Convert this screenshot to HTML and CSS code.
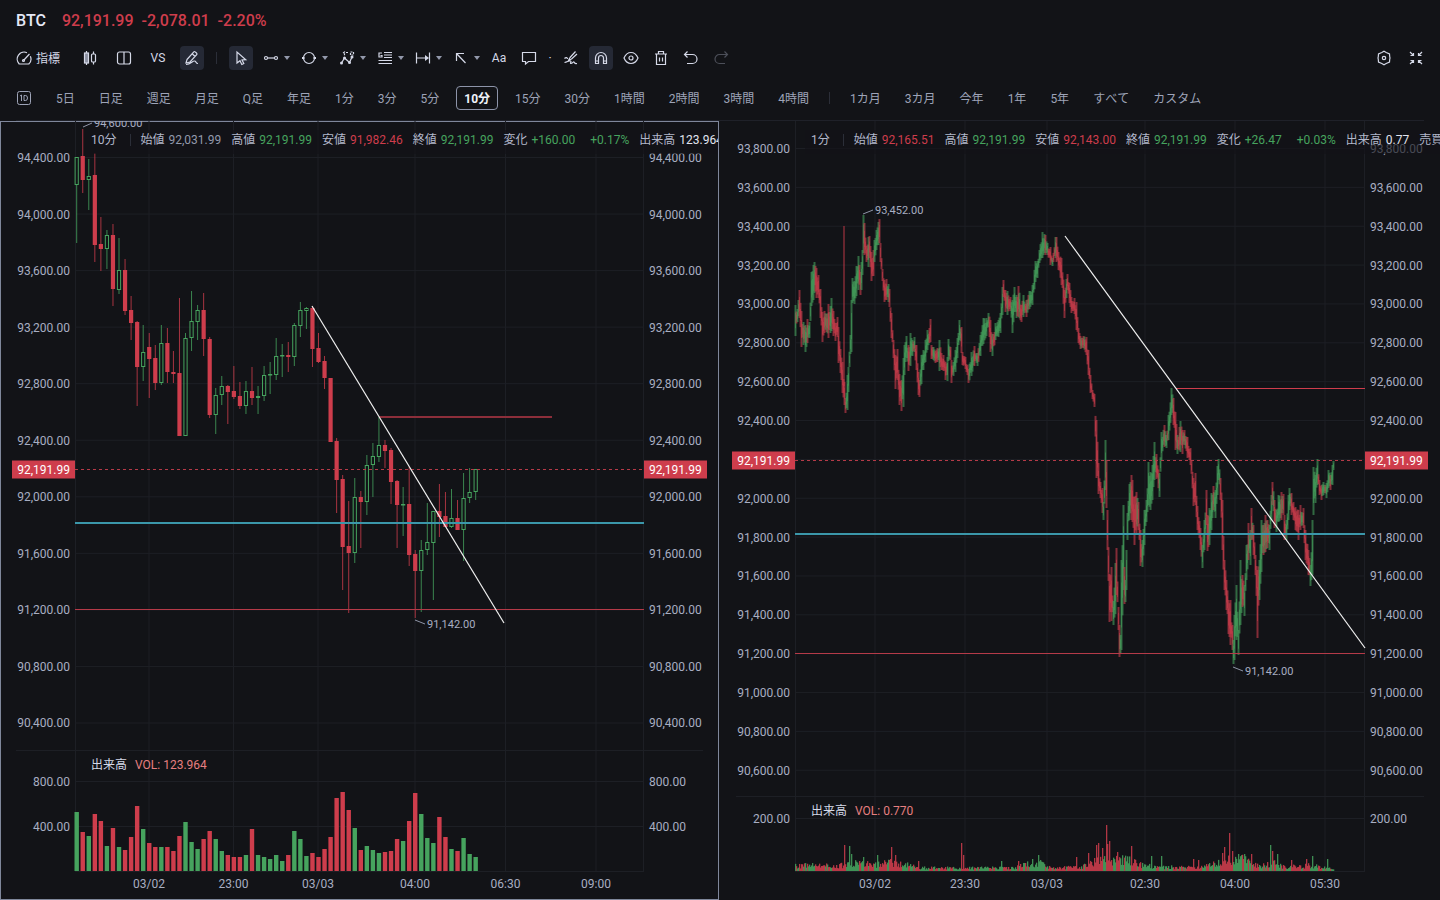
FILE: index.html
```html
<!DOCTYPE html>
<html lang="ja">
<head>
<meta charset="utf-8">
<title>BTC チャート</title>
<link rel="stylesheet" href="styles.css">
</head>
<body>
<main class="app">
  <header class="quote">
    <h1 class="symbol">BTC</h1>
    <span>92,191.99</span><span>-2,078.01</span><span>-2.20%</span>
  </header>

  <nav class="tools" aria-label="ツール">
    <button class="tool tool-text"><svg viewBox="0 0 16 16"><path d="M3.2 14h9.6A7 7 0 0 0 14.400 6.200M11 2.700A7 7 0 0 0 3.200 14M7.500 10.500l6-6.500"/><circle cx="7.500" cy="10.500" r="1"/></svg><span>指標</span></button>
    <button class="tool first" aria-label="ローソク足"><svg viewBox="0 0 16 16"><path d="M4.500 1v2M4.500 13v2M11.500 1.500V4M11.500 12v2.500"/><rect x="2.500" y="3" width="4" height="10" fill="#8b90a0"/><rect x="9.500" y="4" width="4" height="8" rx="1"/></svg></button>
    <button class="tool" aria-label="レイアウト"><svg viewBox="0 0 16 16"><rect x="1.500" y="2" width="13" height="12" rx="2"/><path d="M8 2v12"/></svg></button>
    <button class="tool">VS</button>
    <button class="tool on" aria-label="描画"><svg viewBox="0 0 16 16"><path d="M3 9.500l6.800-7.600a1 1 0 0 1 1.400 0l1.500 1.400a1 1 0 0 1 0 1.400L6 12l-4 1zM8.500 4l2.500 2.500M2 14.500c5 0 6-3.500 8.500-3.500 2 0 1 2.500 3.500 2.500"/></svg></button>
    <span class="divider"></span>
    <button class="tool on" aria-label="選択"><svg viewBox="0 0 16 16"><path d="M4 2v11l3-2.300L8.800 14.500l2-1L9 10l3.800-.3z"/></svg></button>
    <button class="tool wide" aria-label="線"><svg viewBox="0 0 16 16"><path d="M4.500 8h7"/><circle cx="3" cy="8" r="1.500"/><circle cx="13" cy="8" r="1.500"/></svg><i></i></button>
    <button class="tool wide" aria-label="図形"><svg viewBox="0 0 16 16"><circle cx="8" cy="8" r="5.500"/><path d="M1 8h2.500M12.500 8H15" stroke-width="2"/></svg><i></i></button>
    <button class="tool wide" aria-label="波動"><svg viewBox="0 0 16 16"><path d="M2.500 13l3-5 5 4.500L13 7" /><path d="M4 3l1.500-1v4M7 2.500h2M11.500 2h3v3h-3z" stroke-dasharray="2 1"/><g class="solid"><circle cx="2.500" cy="13" r="1.500"/><circle cx="5.500" cy="8" r="1.500"/><circle cx="10.500" cy="12.500" r="1.500"/><circle cx="13" cy="7" r="1.500"/></g></svg><i></i></button>
    <button class="tool wide" aria-label="フィボナッチ"><svg viewBox="0 0 16 16"><path d="M7 2.500h8M7 5h8M7 7.500h8M1.500 10.500h13.500M1.500 13.500h13.500M5 3H2v4h3V5.500H3.500"/></svg><i></i></button>
    <button class="tool wide" aria-label="計測"><svg viewBox="0 0 16 16"><path d="M1.500 2.500v11M14.500 2.500v11M2 8h9"/><path class="solid" d="M10 5l4 3-4 3z"/></svg><i></i></button>
    <button class="tool wide" aria-label="矢印"><svg viewBox="0 0 16 16"><path d="M3.500 11V3.500H11M4 4l8.500 9"/></svg><i></i></button>
    <button class="tool">Aa</button>
    <button class="tool" aria-label="コメント"><svg viewBox="0 0 16 16"><path d="M1.500 2.500h13v9H7.500L4.500 14v-2.500h-3z"/></svg></button>
    <span class="dot">·</span>
    <button class="tool" aria-label="連続描画"><svg viewBox="0 0 16 16"><path d="M7 7.500L12.500 1.500M8.500 9L14 4M7 7.500L5.500 10.500 8.500 9M1.500 8.500c1.500-1.500 3-1 3 .5M1.500 12.500c3-.5 4-2 6-1.500 1.500.5-1 2.500.5 2.500s2-2 3-1.500 0 2 3 1.500"/></svg></button>
    <button class="tool on" aria-label="マグネット"><svg viewBox="0 0 16 16"><path d="M2.500 13.500V8a5.500 5.500 0 0 1 11 0v5.500h-3V8a2.500 2.500 0 0 0-5 0v5.500zM2.500 11h3M10.500 11h3"/></svg></button>
    <button class="tool" aria-label="表示"><svg viewBox="0 0 16 16"><path d="M1 8c1.500-3.500 4-5.500 7-5.500s5.500 2 7 5.500c-1.500 3.500-4 5.500-7 5.500S2.500 11.500 1 8z"/><circle cx="8" cy="8" r="2"/></svg></button>
    <button class="tool" aria-label="削除"><svg viewBox="0 0 16 16"><path d="M2 4h12M5.500 4V1.500h5V4M3.500 4v10.500h9V4M6.500 7.500v4M9.500 7.500v4"/></svg></button>
    <button class="tool" aria-label="元に戻す"><svg viewBox="0 0 16 16"><path d="M4.500 1.500L1.500 4.500l3 3M2 4.500h7.500a4.500 4.500 0 0 1 0 9H4"/></svg></button>
    <button class="tool off" disabled aria-label="やり直す"><svg viewBox="0 0 16 16"><path d="M11.500 1.500l3 3-3 3M14 4.500H6.500a4.500 4.500 0 0 0 0 9H12"/></svg></button>
    <button class="tool push" aria-label="設定"><svg viewBox="0 0 16 16"><path d="M5.800 2.500L8 1.300l2.200 1.200 3.300 1.500.2 2.500.300 1.500-.3 1.500-.2 2.500-3.300 1.500L8 14.700l-2.200-1.200L2.500 12l-.2-2.500L2 8l.3-1.500L2.500 4z"/><circle cx="8" cy="8" r="1.700"/></svg></button>
    <button class="tool shrink" aria-label="縮小"><svg viewBox="0 0 16 16"><path d="M2 2l3.500 3.500M5.500 3v2.500H2.500M14 2l-3.500 3.500M10.500 3v2.500h3M2 14l3.500-3.500M2.500 10.500h3V13M14 14l-3.500-3.500M10.500 13v-2.500h3"/></svg></button>
  </nav>

  <nav class="spans" aria-label="時間足">
    <button class="daily" aria-label="1D"><svg viewBox="0 0 14 14"><rect x=".5" y=".5" width="13" height="13" rx="2"/><path d="M3 5l1.500-1v6M7 4.500h1.500q2 0 2 2.500t-2 2.500H7z"/></svg></button>
    <button>5日</button><button>日足</button><button>週足</button><button>月足</button><button>Q足</button><button>年足</button>
    <button>1分</button><button>3分</button><button>5分</button><button class="active">10分</button><button>15分</button><button>30分</button>
    <button>1時間</button><button>2時間</button><button>3時間</button><button>4時間</button>
    <span class="divider"></span>
    <button>1カ月</button><button>3カ月</button><button>今年</button><button>1年</button><button>5年</button><button>すべて</button><button>カスタム</button>
  </nav>

  <section class="panels">
    <article class="panel selected">
      <svg class="chart" id="chart-10m" role="img" aria-label="BTC 10分足"></svg>
      <div class="legend">
        <span class="period">10分</span><span class="divider"></span>
        <span>始値 <b class="flat">92,031.99</b></span><span>高値 <b class="up">92,191.99</b></span><span>安値 <b class="down">91,982.46</b></span><span>終値 <b class="up">92,191.99</b></span><span>変化 <b class="up">+160.00</b></span><b class="up pct">+0.17%</b><span>出来高 <b class="vol">123.964</b></span>
      </div>
      <div class="vol-legend">出来高<span>VOL: 123.964</span></div>
    </article>
    <article class="panel minute">
      <svg class="chart" id="chart-1m" role="img" aria-label="BTC 1分足"></svg>
      <div class="legend">
        <span class="period">1分</span><span class="divider"></span>
        <span>始値 <b class="down">92,165.51</b></span><span>高値 <b class="up">92,191.99</b></span><span>安値 <b class="down">92,143.00</b></span><span>終値 <b class="up">92,191.99</b></span><span>変化 <b class="up">+26.47</b></span><b class="up pct">+0.03%</b><span>出来高 <b class="vol">0.77</b></span><span>売買代金</span>
      </div>
      <div class="vol-legend">出来高<span>VOL: 0.770</span></div>
    </article>
  </section>
</main>
<script src="chart.js"></script>
</body>
</html>
```
FILE: styles.css
```css
* { box-sizing: border-box; }
body {
  margin: 0;
  background: #121317;
  color: #b3b8cb;
  font: 12px/16px Roboto, "Noto Sans CJK JP", sans-serif;
}
button {
  margin: 0;
  padding: 0;
  border: 0;
  background: none;
  color: inherit;
  font: inherit;
  white-space: nowrap;
}
.app { display: flex; flex-direction: column; height: 100vh; }
.quote {
  display: flex;
  align-items: center;
  gap: 8px;
  height: 40px;
  padding: 2px 16px 0;
  color: #ce3d4c;
  font-size: 16px;
  font-weight: 500;
}
.symbol { margin: 0 8px 0 0; color: #e4e8f6; font: inherit; }
.tools { display: flex; align-items: center; height: 36px; padding: 0 12px 0 16px; color: #d5d9e8; }
.tool {
  display: flex;
  align-items: center;
  justify-content: center;
  flex: none;
  width: 24px;
  height: 24px;
  margin-right: 6px;
  border-radius: 4px;
}
.tool svg, .daily svg {
  width: 16px;
  height: 16px;
  fill: none;
  stroke: currentColor;
  stroke-width: 1.2;
}
.tool .solid { fill: currentColor; stroke: none; }
.tool-text { width: 44px; gap: 4px; margin-right: 18px; }
.tool-text span { padding-top: 2px; }
.tool-text + .tool, .tool-text + .tool + .tool, .tool-text + .tool + .tool + .tool { margin-right: 10px; }
.tool.on { background: #252935; }
.tool.wide { width: 32px; justify-content: flex-start; padding-left: 4px; gap: 5px; }
.tool i {
  flex: none;
  border: 3px solid transparent;
  border-top: 4px solid #9298ab;
  border-bottom: 0;
}
.tool.off { color: #4c4f59; }
.tool.push { margin-left: auto; margin-right: 8px; }
.tool.shrink { margin-right: 0; }
.dot { width: 6px; margin-right: 6px; text-align: center; }
.divider { flex: none; width: 1px; height: 12px; background: #2b2e38; }
.tools .divider { margin: 0 12px 0 6px; }
.spans {
  display: flex;
  align-items: center;
  gap: 16px;
  height: 45px;
  margin: 0 16px;
  border-bottom: 1px solid #1f2129;
  color: #9ea4b8;
  font-kerning: none;
}
.spans button { padding: 2px 4px 0; }
.spans .daily { display: flex; justify-content: center; width: 24px; margin-left: -4px; padding: 0; }
.daily svg { flex: none; width: 14px; height: 14px; stroke-width: 1; }
.spans .active {
  height: 24px;
  margin: 0 -3px;
  padding: 2px 7px 0;
  border: 1px solid #8d94a9;
  border-radius: 4px;
  color: #f1f3fb;
  font-weight: 700;
}
.panels { display: grid; grid-template-columns: 1fr 1fr; flex: 1; min-height: 0; }
.panel { position: relative; min-width: 0; overflow: hidden; }
.panel.selected { margin-right: 1px; box-shadow: inset 0 0 0 1px #7f879b; }
.chart { display: block; width: 100%; height: 100%; }
.legend {
  position: absolute;
  top: 9px;
  left: 85px;
  right: 1px;
  display: flex;
  align-items: center;
  gap: 10px;
  height: 24px;
  padding: 0 0 4px 6px;
  overflow: hidden;
  background: rgba(18, 19, 23, .65);
  white-space: nowrap;
}
.minute .legend { right: 0; }
.legend > * { flex: none; }
.legend span { display: flex; gap: 4px; }
.legend .period { margin-right: 3px; }
.legend b { font-weight: 400; }
.legend .pct { margin-left: 5px; }
.flat { color: #9399ac; }
.up { color: #46a35e; }
.down { color: #ce3d4c; }
.vol { color: #e1e4ef; }
.vol-legend {
  position: absolute;
  top: calc(80.8% + 7px);
  left: 91px;
  display: flex;
  gap: 8px;
  color: #d5d9e8;
}
.minute .vol-legend { top: calc(86.7% + 7px); }
.vol-legend span { color: #e67f80; }

.grid { stroke: #1d1f25; }
.axis-text { fill: #a8aec2; font-size: 12px; }
.tag { fill: #ce3d4c; }
.tag-text { fill: #fff; font-size: 12px; }
.note { fill: #a8aec2; font-size: 11px; }
.leader { stroke: #8e94a7; }
.trend { stroke: #f0f0f0; stroke-width: 1.2; }
.support { stroke: #3b97aa; stroke-width: 2; }
.level { stroke: #b53a48; }
.level-soft { stroke: #8c2e3a; stroke-width: 2; }
.level-bright { stroke: #ce3d4c; }
.last { stroke: #b53a48; stroke-dasharray: 3 3; }
.end { text-anchor: end; }
.middle { text-anchor: middle; }
```
FILE: chart.js
```js
const RED = '#ce3d4c', GREEN = '#46a35e';
const NS = 'http://www.w3.org/2000/svg';
const TOP = 121, BASE_H = 779, VOL_ZERO = 871;

// colour, high, body top, body bottom, low, volume
const tenMinute = `g 157 157 185 243 59|r 129 156 180 193 39|g 159 176 180 210 35|r 153 175 245 262 57|r 217 244 249 271 50|g 230 235 249 269 25|r 224 235 289 306 43|g 238 270 290 294 24|r 259 270 311 315 21|r 296 310 323 340 34|r 321 322 367 406 65|g 325 352 367 381 42|r 333 347 359 398 28|r 345 358 383 390 24|g 325 343 383 385 24|r 328 343 372 383 24|r 351 372 374 383 20|r 298 373 436 436 35|g 333 338 436 436 49|g 291 321 338 351 29|g 305 310 322 340 22|r 293 310 339 356 32|r 337 339 415 418 40|g 388 395 415 434 32|g 376 386 395 405 20|r 385 386 392 424 16|r 366 391 397 399 14|r 382 396 406 409 14|g 381 391 406 414 16|r 367 391 398 405 42|g 386 396 398 414 16|g 366 375 396 401 14|g 362 374 375 394 12|g 338 356 375 380 16|g 344 355 356 377 10|r 342 355 357 372 16|g 323 325 357 366 40|g 302 310 326 337 32|g 307 308 311 329 15|r 306 308 349 367 18|r 333 348 362 363 14|r 356 361 378 389 22|r 378 378 442 442 34|r 438 441 480 513 73|r 475 479 547 590 79|r 501 546 553 613 61|g 478 497 553 563 43|r 491 497 502 548 21|g 455 465 502 515 25|g 443 456 465 497 21|g 417 445 457 462 18|r 440 445 451 468 19|r 448 450 482 504 20|r 480 481 505 548 32|g 487 504 505 536 30|r 467 504 555 566 50|r 550 554 571 618 78|g 540 550 571 612 57|g 503 542 550 555 33|g 511 511 543 600 28|r 484 511 517 537 54|r 492 516 527 527 34|g 489 518 527 528 22|r 500 518 530 530 20|g 473 498 530 561 33|g 468 492 498 503 17|g 469 469 492 500 14`
  .split('|').map(row => row.split(' ').map((v, i) => i ? +v : v));

// minute, high, low
const minuteRange = `0 305 336|2 309 322|4 290 318|6 311 347|8 322 345|10 325 352|12 319 343|14 322 338|16 272 306|18 265 300|19 262 293|21 268 298|23 275 298|25 289 318|27 312 342|29 311 333|31 314 332|33 304 338|35 306 333|36 298 331|38 311 336|40 323 341|42 317 337|43 327 363|45 349 373|47 362 393|49 382 405|50 398 413|52 375 410|53 367 392|55 335 354|56 300 352|57 278 303|59 281 304|61 266 296|63 256 290|65 272 295|66 262 290|67 250 275|68 215 253|69 223 255|71 246 262|73 237 267|74 236 258|76 252 281|78 250 276|79 240 262|81 230 250|83 222 245|84 219 243|85 243 262|87 269 281|89 280 302|91 279 300|93 284 302|94 289 307|96 313 338|98 340 358|100 355 389|102 349 380|104 374 405|106 380 411|108 358 407|109 345 375|111 336 358|113 345 371|115 333 366|117 340 356|119 337 352|121 345 370|123 372 395|124 380 397|126 355 384|128 350 370|130 340 362|132 330 350|134 328 343|135 319 342|136 345 359|138 347 360|140 351 363|142 348 362|144 340 371|146 353 370|148 355 371|150 362 380|152 357 381|153 339 361|155 347 360|156 360 383|158 362 376|160 350 372|162 338 358|163 333 345|164 320 340|166 327 353|167 352 365|170 357 369|173 369 383|176 352 376|179 346 366|182 353 366|185 335 356|188 318 344|191 318 336|193 313 327|195 320 352|197 334 356|200 323 340|203 320 337|205 313 333|207 287 315|208 280 297|210 290 312|212 291 315|215 297 311|217 300 333|219 287 312|221 295 318|223 286 317|226 305 322|228 295 317|231 300 317|234 291 309|237 285 305|240 261 282|242 261 278|244 250 263|247 232 258|250 235 255|252 243 255|255 247 265|257 258 266|260 237 258|261 237 262|263 252 270|266 258 285|269 290 318|271 279 298|272 274 290|274 283 303|276 297 313|279 298 314|281 302 330|283 328 343|285 336 349|288 336 348|291 337 355|293 350 375|295 375 393|297 390 399|299 394 407|301 420 478|303 463 494|305 482 498|307 488 513|308 502 520|310 440 490|311 460 508|312 510 550|314 574 622|316 567 621|318 601 625|320 563 614|321 548 595|323 607 630|324 625 657|325 635 653|326 560 650|328 505 590|329 567 604|330 580 602|331 550 590|332 513 540|334 484 520|336 475 520|337 480 522|339 497 545|341 492 535|343 502 530|345 530 566|347 540 567|349 510 545|351 500 522|353 462 505|355 472 510|357 465 500|359 442 480|361 454 479|364 473 497|366 432 460|369 425 447|371 435 448|373 415 440|376 388 415|378 398 425|380 412 450|382 435 454|385 421 452|387 430 454|389 430 445|392 437 458|395 448 465|398 478 506|400 473 505|402 506 530|405 528 550|407 545 568|409 520 550|411 490 525|412 515 551|414 508 545|416 493 530|418 486 510|420 490 518|422 466 495|423 459 480|425 478 500|427 500 550|429 560 590|431 580 610|433 600 634|435 600 645|437 625 650|438 640 664|439 615 660|441 585 640|443 630 655|445 560 625|447 575 607|449 585 616|451 545 580|453 523 560|455 530 565|456 508 540|458 525 555|460 555 575|462 570 638|464 560 600|466 520 572|468 525 555|470 515 552|472 520 548|474 525 550|476 495 520|477 482 505|479 500 528|481 510 532|483 495 522|486 492 520|488 494 515|489 515 540|491 520 540|493 495 520|494 488 510|496 493 515|498 502 520|500 507 530|503 510 540|505 505 530|508 508 528|510 530 560|513 550 575|515 565 586|517 520 575|518 467 515|520 475 503|522 459 485|524 480 495|526 485 500|528 482 495|531 483 498|533 470 488|535 475 490|537 465 485|538 461 470`
  .split('|').map(row => row.split(' ').map(Number));

// minute, typical volume
const volumeLevel = [[0, 7], [45, 7], [55, 10], [80, 8], [95, 11], [110, 8], [125, 4], [220, 4], [230, 10], [245, 10], [255, 4], [285, 5], [300, 13], [330, 15], [345, 8], [365, 5], [400, 5], [420, 9], [440, 17], [455, 11], [465, 6], [478, 11], [490, 5], [515, 7], [530, 4], [539, 2]];
const volumeSpikes = { 49: 26, 54: 25, 56: 17, 68: 14, 82: 16, 96: 24, 100: 16, 123: 10, 166: 28, 168: 16, 206: 10, 223: 10, 237: 12, 243: 16, 281: 14, 293: 18, 301: 26, 303: 28, 307: 23, 311: 46, 312: 27, 314: 30, 322: 19, 336: 25, 356: 15, 366: 15, 398: 12, 403: 11, 427: 18, 429: 24, 434: 38, 437: 20, 443: 17, 449: 17, 456: 17, 475: 26, 477: 20, 482: 17, 496: 11, 511: 12, 517: 15, 532: 12 };
const noise = i => { const v = Math.sin(i * 127.1 + 11.7) * 43758.5453; return v - Math.floor(v); };

function between(rows, x, col) {
  const k = Math.max(1, rows.findIndex(r => r[0] >= x));
  const a = rows[k - 1], b = rows[k];
  return a[col] + (b[col] - a[col]) * (x - a[0]) / (b[0] - a[0]);
}

const charts = [
  {
    id: 'chart-10m', width: 569, split: 750.5, first: 94400, firstY: 157.5, step: 400, gap: 56.55, rows: 11,
    times: [[74, '03/02'], [158.500, '23:00'], [243, '03/03'], [340, '04:00'], [430.500, '06:30'], [521, '09:00']],
    volumes: [[781.5, '800.00'], [826.5, '400.00']], lastY: 469.5,
    lines: [['support', 0, 523, 569, 523], ['level', 0, 609.5, 569, 609.5], ['level-soft', 304, 417, 477, 417], ['trend', 237, 306, 429, 623]],
    notes: [[8, 127, 17, 123, '94,600.00'], [340, 620, 350, 624, '91,142.00']],
    series: drawTenMinute
  },
  {
    id: 'chart-1m', width: 570, split: 796.5, first: 93800, firstY: 148.5, step: 200, gap: 38.86, rows: 17, hidden: 92200,
    times: [[80, '03/02'], [170, '23:30'], [252, '03/03'], [350, '02:30'], [440, '04:00'], [530, '05:30']],
    volumes: [[818.5, '200.00']], lastY: 460.5,
    lines: [['support', 0, 534, 570, 534], ['level', 0, 653.5, 570, 653.5], ['level-bright', 381, 388.5, 570, 388.5], ['trend', 270, 236, 570, 648]],
    notes: [[68, 214, 78, 210, '93,452.00'], [438, 667, 448, 671, '91,142.00']],
    series: drawMinute
  }
];

function drawTenMinute(c) {
  tenMinute.forEach(([side, hi, top, bottom, lo, vol], i) => {
    const x = 1.7 + i * 6.045, color = side === 'g' ? GREEN : RED;
    c.line(x, hi, x, top, { stroke: color, opacity: .8 });
    c.line(x, bottom, x, lo, { stroke: color, opacity: .8 });
    const h = Math.max(1, bottom - top);
    if (side === 'g') c.rect(x - 1.6, top + .5, 3.2, Math.max(.5, h - 1), { fill: 'none', stroke: color });
    else c.rect(x - 2.1, top, 4.2, h, { fill: color });
    c.rect(x - 2.2, VOL_ZERO - vol, 4.4, vol, { fill: color });
  });
}

function drawMinute(c) {
  let k = 0;
  for (let i = 0; i < 539; i++) {
    while (k < minuteRange.length - 1 && minuteRange[k + 1][0] <= i) k++;
    const [minute, high, low] = minuteRange[k];
    const next = minuteRange[Math.min(k + 1, minuteRange.length - 1)];
    const prev = minuteRange[Math.max(k - 1, 0)];
    // the keyed minute spans its whole range; the minutes after it drift to the next one
    const t = minute === i ? 0 : (i - minute) / (next[0] - minute);
    const hi = high + (next[1] - high) * t, lo = low + (next[2] - low) * t;
    const span = lo - hi, trim = minute === i ? 0 : .3;
    const slope = next[1] + next[2] - prev[1] - prev[2];
    const color = slope + (noise(i + 900) - .5) * 70 < 0 ? GREEN : RED;
    const a = hi + span * noise(i) * trim, b = lo - span * noise(i + 50) * trim;
    c.rect(i - .5, a, 2, b - a, { fill: color, opacity: .6 });
    c.rect(i, a + (b - a) * .25, 1, (b - a) * .5, { fill: color, opacity: .5 });
    const vol = volumeSpikes[i] || Math.max(1, between(volumeLevel, i, 1) * (.35 + noise(i + 300) * .8));
    c.rect(i, VOL_ZERO - vol, 1.3, vol, { fill: color, opacity: .85 });
  }
  c.rect(48.4, 226, 1.2, 160, { fill: RED, opacity: .75 });
}

function render(chart) {
  const svg = document.getElementById(chart.id);
  const W = svg.clientWidth, H = svg.clientHeight;
  const sx = (W - 150) / chart.width, sy = H / BASE_H;
  const X = x => 75 + x * sx, Y = y => (y - TOP) * sy;
  svg.replaceChildren();
  const add = (tag, attrs, text) => {
    const el = document.createElementNS(NS, tag);
    for (const key in attrs) el.setAttribute(key, attrs[key]);
    if (text) el.textContent = text;
    svg.append(el);
  };
  const c = {
    line: (x1, y1, x2, y2, attrs) => add('line', { x1: X(x1), y1: Y(y1), x2: X(x2), y2: Y(y2), ...attrs }),
    rect: (x, y, w, h, attrs) => add('rect', { x: X(x), y: Y(y), width: w * sx, height: h * sy, ...attrs })
  };
  const label = (x, y, text, cls) => add('text', { x, y: Math.ceil(Y(y)) + 4, class: cls }, text);
  const grid = { class: 'grid' };
  const sides = (y, text) => {
    label(70, y, text, 'axis-text end');
    label(W - 70, y, text, 'axis-text');
  };

  for (const [x] of chart.times) c.line(x, TOP, x, VOL_ZERO, grid);
  c.line(.5, TOP, .5, VOL_ZERO, grid);
  c.line(chart.width - .5, TOP, chart.width - .5, VOL_ZERO, grid);
  add('line', { x1: 16, x2: W - 16, y1: Y(chart.split), y2: Y(chart.split), class: 'grid' });
  c.line(0, VOL_ZERO + .5, chart.width, VOL_ZERO + .5, grid);
  for (let i = 0; i < chart.rows; i++) {
    const y = chart.firstY + i * chart.gap, price = chart.first - i * chart.step;
    c.line(0, y, chart.width, y, grid);
    if (price !== chart.hidden) sides(y, price.toLocaleString('en-US', { minimumFractionDigits: 2 }));
  }
  for (const [y, text] of chart.volumes) {
    c.line(0, y, chart.width, y, grid);
    sides(y, text);
  }
  for (const [x, text] of chart.times) label(X(x), 884, text, 'axis-text middle');
  chart.series(c);
  c.line(0, chart.lastY, chart.width, chart.lastY, { class: 'last' });
  for (const [cls, ...p] of chart.lines) c.line(...p, { class: cls });
  for (const [x1, y1, x2, y2, text] of chart.notes) {
    c.line(x1, y1, x2, y2, { class: 'leader' });
    label(X(x2) + 2, y2, text, 'note');
  }
  for (const x of [12, W - 75]) {
    add('rect', { x, y: Y(chart.lastY) - 9, width: 63, height: 18, class: 'tag' });
    label(x + (x === 12 ? 58 : 5), chart.lastY, '92,191.99', x === 12 ? 'tag-text end' : 'tag-text');
  }
}

const renderAll = () => charts.forEach(render);
renderAll();
addEventListener('resize', renderAll);
```
